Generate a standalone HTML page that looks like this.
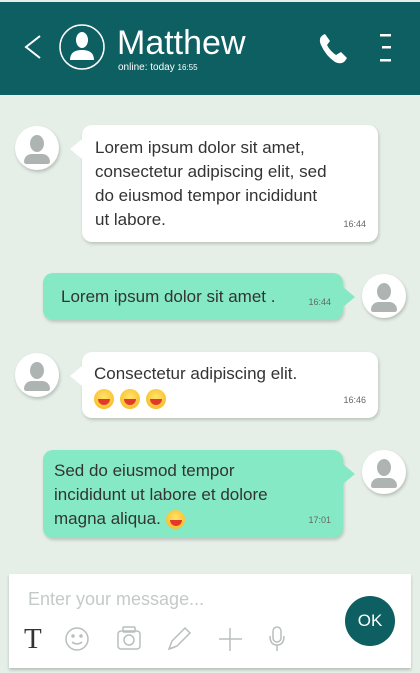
<!DOCTYPE html><html><head><style>
body{margin:0;width:420px;height:673px;background:#e5eee7;font-family:"Liberation Sans",sans-serif;position:relative;overflow:hidden}
.h{position:absolute;left:0;top:2px;width:420px;height:93px;background:#0d5f62}
.a{position:absolute;width:44px;height:44px;border-radius:50%;background:#fff;box-shadow:1px 2px 3px rgba(0,0,0,.2);overflow:hidden}
.a:before{content:"";position:absolute;left:15px;top:9px;width:14px;height:17px;border-radius:50%;background:#aeb4b1}
.a:after{content:"";position:absolute;left:9px;top:28px;width:26px;height:10px;border-radius:10px 10px 3px 3px;background:#aeb4b1}
.b{position:absolute;border-radius:10px;box-shadow:1px 2px 3px rgba(0,0,0,.18);font-size:17px;color:#333;line-height:24px}
.w{background:#fff}.g{background:#86e9c5}
.t{position:absolute;right:12px;bottom:6px;font-size:9px;color:#666}
.tl:before{content:"";position:absolute;left:-20px;top:14px;border:10px solid transparent;border-right:12px solid #fff;border-left-width:8px}
.tr:after{content:"";position:absolute;right:-20px;top:14px;border:10px solid transparent;border-left:12px solid #86e9c5;border-right-width:8px}
.e{display:inline-block;width:20px;height:20px;border-radius:50%;background:radial-gradient(circle at 50% 40%,#ffe46a,#f7b21a);position:relative;vertical-align:middle;margin-right:6px}
.e:after{content:"";position:absolute;left:4px;top:10px;width:12px;height:6px;background:#e23a2a;border-radius:0 0 7px 7px}
</style></head><body>
<div class="h">
<svg width="420" height="93" style="position:absolute;left:0;top:0">
<path d="M40 34 L26 45 L40 56" stroke="#fff" stroke-width="2" fill="none"/>
<circle cx="82" cy="45" r="22" stroke="#fff" stroke-width="1.5" fill="none"/>
<ellipse cx="82" cy="38" rx="6" ry="8" fill="#fff"/><path d="M70 58 Q70 48 82 48 Q94 48 94 58 Z" fill="#fff"/>
<path d="M323 33 q-5 3 -2 10 q5 11 14 17 q6 3 10 -1 l2 -3 l-6 -6 l-5 3 q-6 -4 -9 -10 l3 -4 l-5 -7 z" fill="#fff"/>
<rect x="380" y="32" width="11" height="2.5" fill="#fff"/><rect x="382" y="44" width="9" height="2.5" fill="#fff"/><rect x="380" y="57" width="11" height="2.5" fill="#fff"/>
</svg>
<div style="position:absolute;left:117px;top:22px;font-size:34px;color:#fff">Matthew</div>
<div style="position:absolute;left:118px;top:60px;font-size:10px;color:#fff">online: today <span style="font-size:8px">16:55</span></div>
</div>
<div class="a" style="left:15px;top:126px"></div>
<div class="b w tl" style="left:82px;top:125px;width:296px;height:117px"><div style="position:absolute;left:13px;top:11px;width:275px;white-space:nowrap">Lorem ipsum dolor sit amet,<br>consectetur adipiscing elit, sed<br>do eiusmod tempor incididunt<br>ut labore.</div><span class="t">16:44</span></div>
<div class="a" style="left:362px;top:274px"></div>
<div class="b g tr" style="left:43px;top:273px;width:300px;height:47px"><div style="position:absolute;left:18px;top:12px">Lorem ipsum dolor sit amet .</div><span class="t">16:44</span></div>
<div class="a" style="left:15px;top:353px"></div>
<div class="b w tl" style="left:82px;top:352px;width:296px;height:66px"><div style="position:absolute;left:12px;top:10px">Consectetur adipiscing elit.<br><span class="e"></span><span class="e"></span><span class="e"></span></div><span class="t">16:46</span></div>
<div class="a" style="left:362px;top:450px"></div>
<div class="b g tr" style="left:43px;top:450px;width:300px;height:88px"><div style="position:absolute;left:11px;top:9px;width:245px">Sed do eiusmod tempor incididunt ut labore et dolore magna aliqua. <span class="e" style="width:19px;height:19px"></span></div><span class="t">17:01</span></div>
<div style="position:absolute;left:9px;top:574px;width:402px;height:94px;background:#fff;box-shadow:0 2px 3px rgba(0,0,0,.2)">
<div style="position:absolute;left:19px;top:15px;font-size:18px;color:#c4cac7">Enter your message...</div>
<div style="position:absolute;left:15px;top:49px;font-family:'Liberation Serif',serif;font-size:29px;color:#333">T</div>
<svg width="300" height="40" style="position:absolute;left:50px;top:48px" fill="none" stroke="#b9bebc" stroke-width="1.5">
<circle cx="18" cy="17" r="11"/><circle cx="14" cy="14" r="1" fill="#b9bebc"/><circle cx="22" cy="14" r="1" fill="#b9bebc"/><path d="M13 20 q5 4 10 0"/>
<rect x="59" y="9" width="22" height="18" rx="3"/><rect x="64" y="5" width="12" height="5" rx="1"/><circle cx="70" cy="18" r="5"/>
<path d="M110 27 l3 -8 l13 -13 l5 5 l-13 13 z M110 27 l6 -2"/>
<path d="M171 6 v23 M160 17 h23"/>
<rect x="214" y="5" width="8" height="15" rx="4"/><path d="M211 14 q0 9 7 9 q7 0 7 -9 M218 23 v6"/>
</svg>
<div style="position:absolute;left:336px;top:22px;width:50px;height:50px;border-radius:50%;background:#0d5f62;color:#fff;font-size:17px;line-height:50px;text-align:center">OK</div>
</div>
</body></html>
